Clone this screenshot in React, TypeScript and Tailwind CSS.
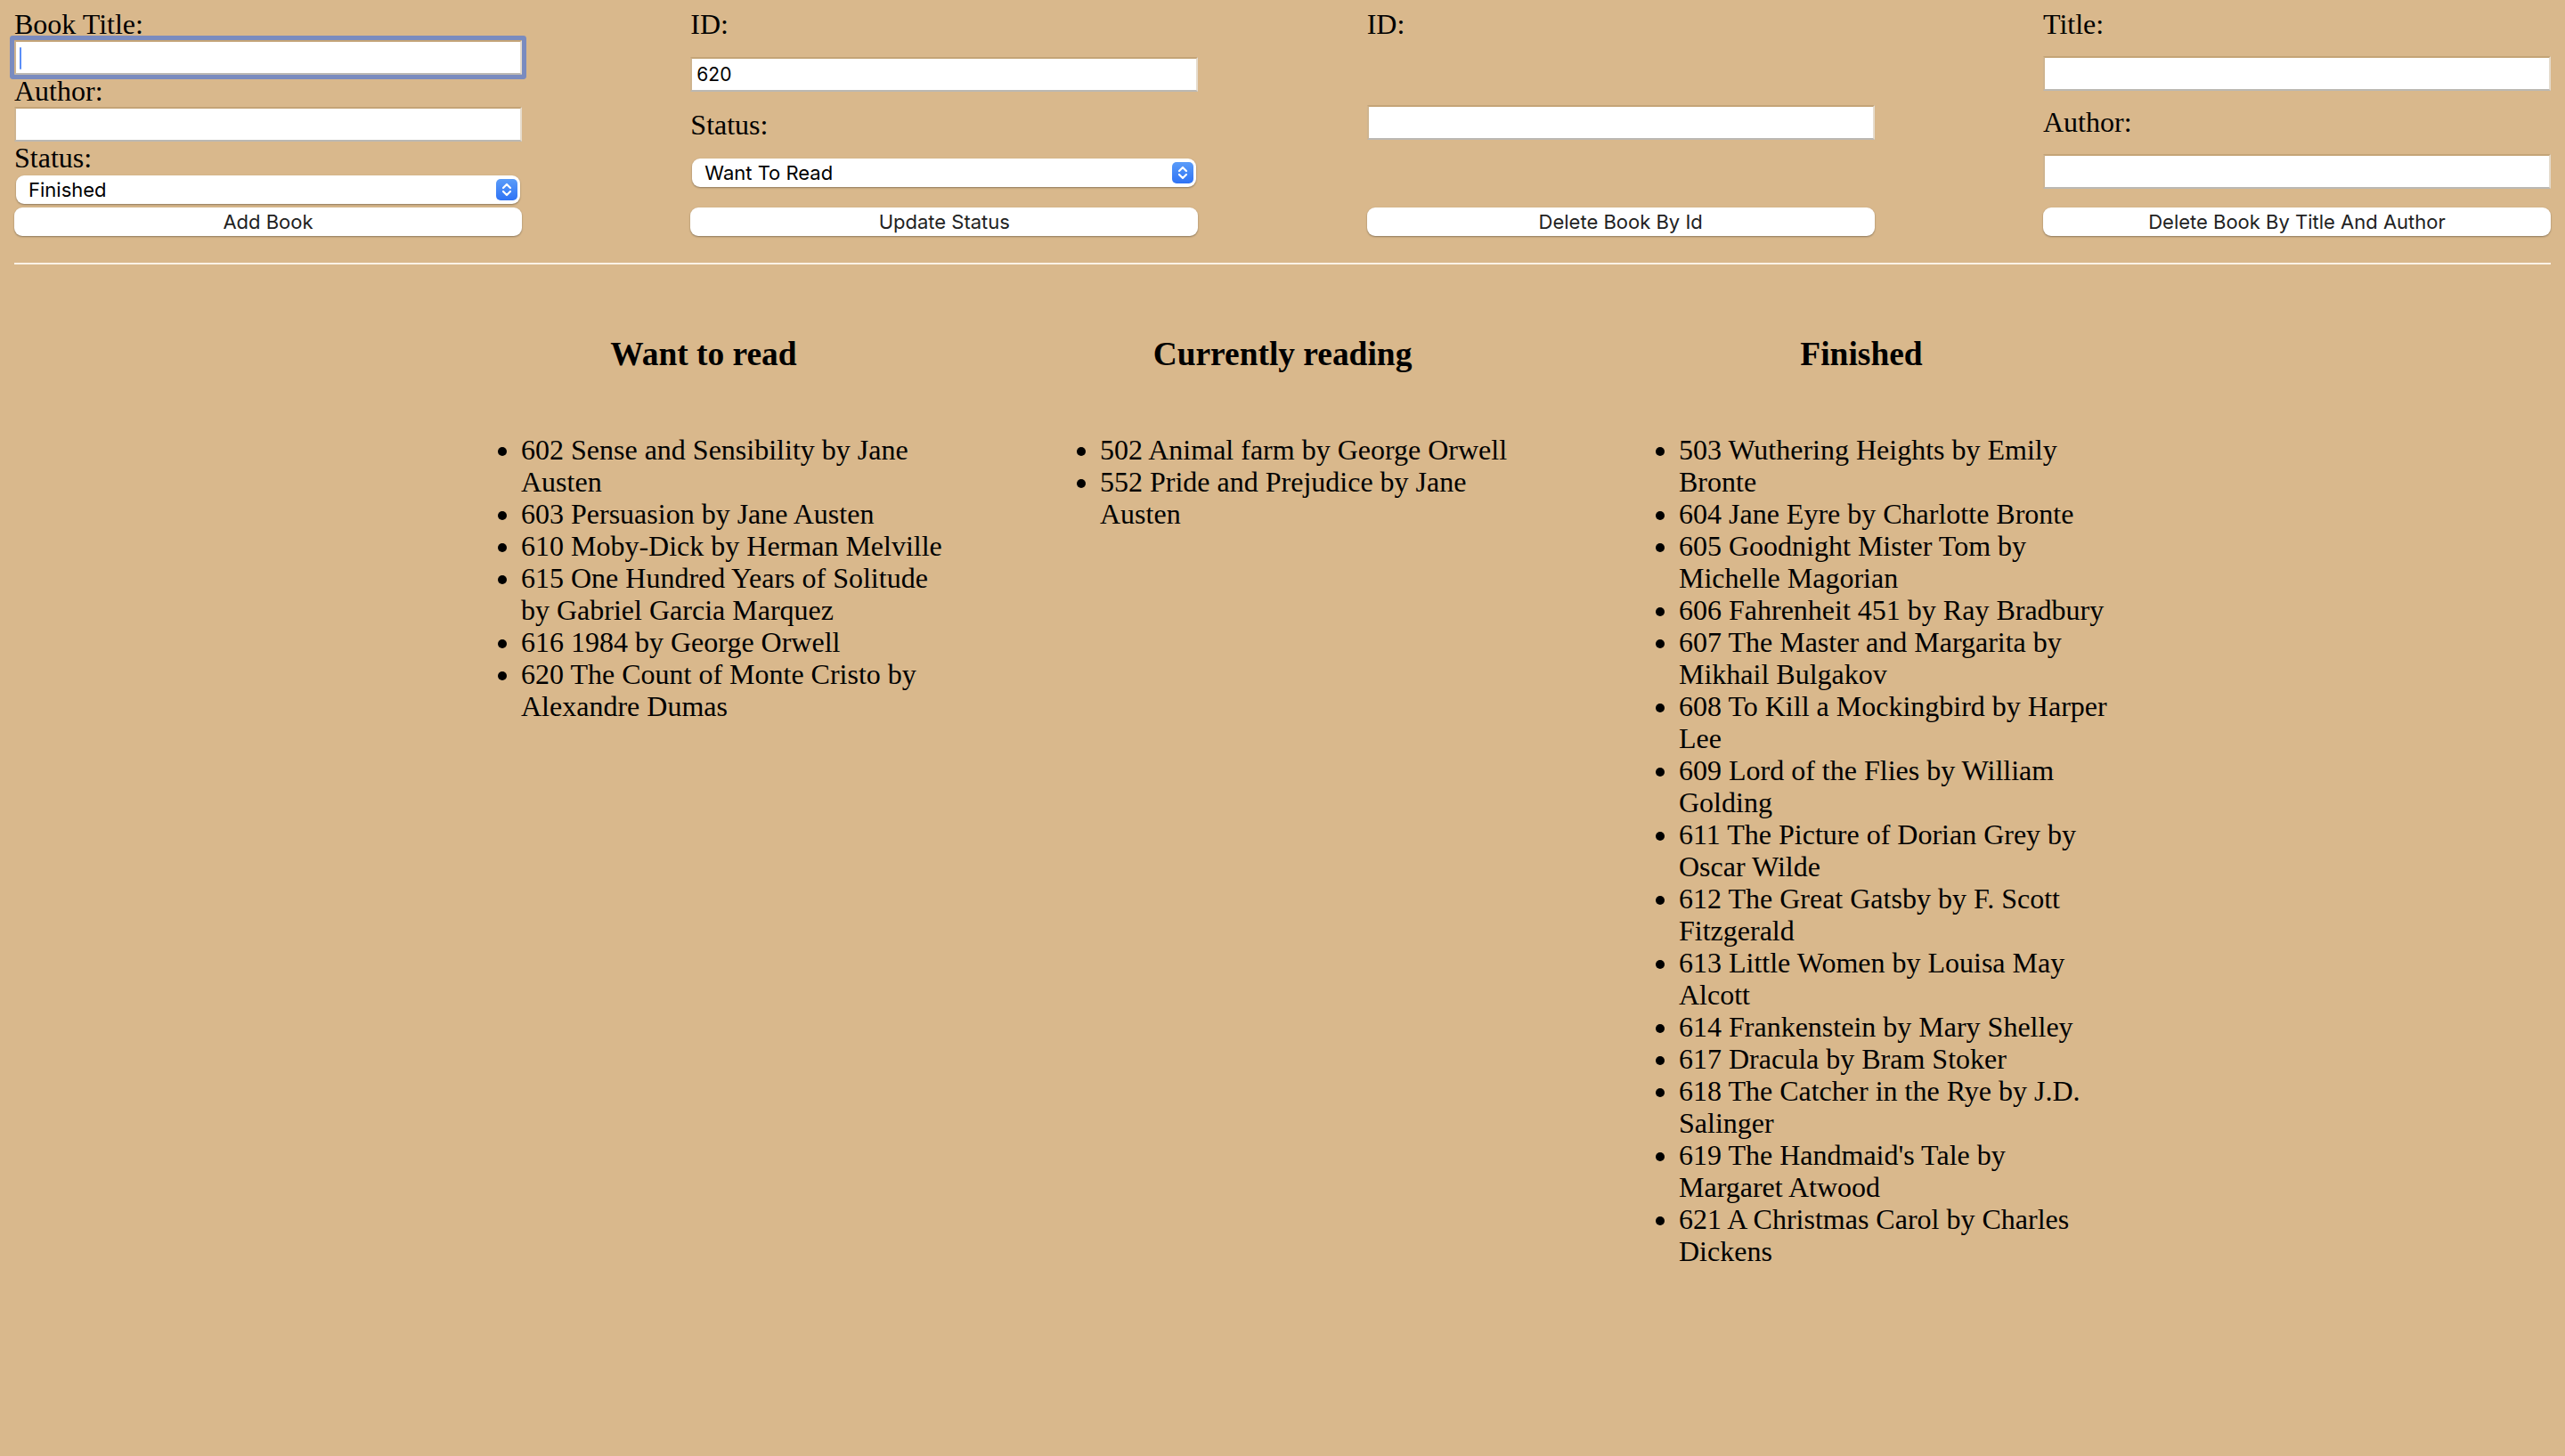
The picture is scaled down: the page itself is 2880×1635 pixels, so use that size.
import React from 'react';

const wantToRead = [
  '602 Sense and Sensibility by Jane Austen',
  '603 Persuasion by Jane Austen',
  '610 Moby-Dick by Herman Melville',
  '615 One Hundred Years of Solitude by Gabriel Garcia Marquez',
  '616 1984 by George Orwell',
  '620 The Count of Monte Cristo by Alexandre Dumas',
];

const currentlyReading = [
  '502 Animal farm by George Orwell',
  '552 Pride and Prejudice by Jane Austen',
];

const finished = [
  '503 Wuthering Heights by Emily Bronte',
  '604 Jane Eyre by Charlotte Bronte',
  '605 Goodnight Mister Tom by Michelle Magorian',
  '606 Fahrenheit 451 by Ray Bradbury',
  '607 The Master and Margarita by Mikhail Bulgakov',
  '608 To Kill a Mockingbird by Harper Lee',
  '609 Lord of the Flies by William Golding',
  '611 The Picture of Dorian Grey by Oscar Wilde',
  '612 The Great Gatsby by F. Scott Fitzgerald',
  '613 Little Women by Louisa May Alcott',
  '614 Frankenstein by Mary Shelley',
  '617 Dracula by Bram Stoker',
  '618 The Catcher in the Rye by J.D. Salinger',
  "619 The Handmaid's Tale by Margaret Atwood",
  '621 A Christmas Carol by Charles Dickens',
];

const Label: React.FC<{ children: React.ReactNode }> = ({ children }) => (
  <label className="block text-[32px] leading-[36px]">{children}</label>
);

const TextInput: React.FC<{ value?: string; focused?: boolean }> = ({ value = '', focused }) => (
  <div className="relative">
    <input
      readOnly
      value={value}
      className={`block h-[39px] w-full border-2 border-t-[#c4a477] border-l-[#cfb48f] border-r-[#e6dccd] border-b-[#bbb8b3] bg-white pl-[5px] font-['Inter',sans-serif] text-[21px] text-black outline-none ${
        focused ? 'rounded-[1px] ring-[5px] ring-[#7a8bbf]' : ''
      }`}
    />
    {focused && <span className="absolute left-[6px] top-[8px] h-[25px] w-[2px] rounded-full bg-[#5b8ff8]" />}
  </div>
);

const Stepper = () => (
  <svg width="24" height="24" viewBox="0 0 24 24">
    <defs>
      <linearGradient id="stepperGrad" x1="0" y1="0" x2="0" y2="1">
        <stop offset="0" stopColor="#5a9cf9" />
        <stop offset="1" stopColor="#2f73f5" />
      </linearGradient>
    </defs>
    <rect width="24" height="24" rx="5" fill="url(#stepperGrad)" />
    <path d="M8 10 L12 6 L16 10" stroke="white" strokeWidth="2.2" fill="none" strokeLinecap="round" strokeLinejoin="round" />
    <path d="M8 14 L12 18 L16 14" stroke="white" strokeWidth="2.2" fill="none" strokeLinecap="round" strokeLinejoin="round" />
  </svg>
);

const Select: React.FC<{ value: string }> = ({ value }) => (
  <div className="mx-[2px] mt-[2px] flex h-[32px] items-center justify-between rounded-[9px] bg-white pl-[14px] pr-[3px] shadow-[0_1px_2px_rgba(0,0,0,0.35)]">
    <span className="font-['Inter',sans-serif] text-[22px] text-black">{value}</span>
    <Stepper />
  </div>
);

const Button: React.FC<{ children: React.ReactNode }> = ({ children }) => (
  <button className="mt-[4px] h-[32px] w-full rounded-[9px] bg-white font-['Inter',sans-serif] text-[22px] text-[#222] shadow-[0_1px_2px_rgba(0,0,0,0.35)]">
    {children}
  </button>
);

const BookList: React.FC<{ title: string; books: string[] }> = ({ title, books }) => (
  <div className="w-[570px]">
    <h3 className="text-center text-[37.44px] font-bold leading-[43px]">{title}</h3>
    <ul className="mt-[68px] list-disc pl-[80px] text-[32px] leading-[36px]">
      {books.map((b) => (
        <li key={b}>{b}</li>
      ))}
    </ul>
  </div>
);

export default function App() {
  return (
    <div className="min-h-screen bg-[#d9b88c] font-['Liberation_Serif',serif] text-black">
      {/* forms */}
      <div className="flex items-stretch justify-between px-4 pt-[9px]">
        <div className="flex w-[570px] flex-col justify-between">
          <Label>Book Title:</Label>
          <TextInput focused />
          <Label>Author:</Label>
          <TextInput />
          <Label>Status:</Label>
          <Select value="Finished" />
          <Button>Add Book</Button>
        </div>

        <div className="flex w-[570px] flex-col justify-between">
          <Label>ID:</Label>
          <TextInput value="620" />
          <Label>Status:</Label>
          <Select value="Want To Read" />
          <Button>Update Status</Button>
        </div>

        <div className="flex w-[570px] flex-col justify-between">
          <Label>ID:</Label>
          <TextInput />
          <Button>Delete Book By Id</Button>
        </div>

        <div className="flex w-[570px] flex-col justify-between">
          <Label>Title:</Label>
          <TextInput />
          <Label>Author:</Label>
          <TextInput />
          <Button>Delete Book By Title And Author</Button>
        </div>
      </div>

      <div className="mx-4 mt-[30px] h-[2px] bg-[#fbf2e6]" />

      {/* lists */}
      <div className="flex justify-center gap-[80px] pt-[79px]">
        <BookList title="Want to read" books={wantToRead} />
        <BookList title="Currently reading" books={currentlyReading} />
        <BookList title="Finished" books={finished} />
      </div>
    </div>
  );
}
